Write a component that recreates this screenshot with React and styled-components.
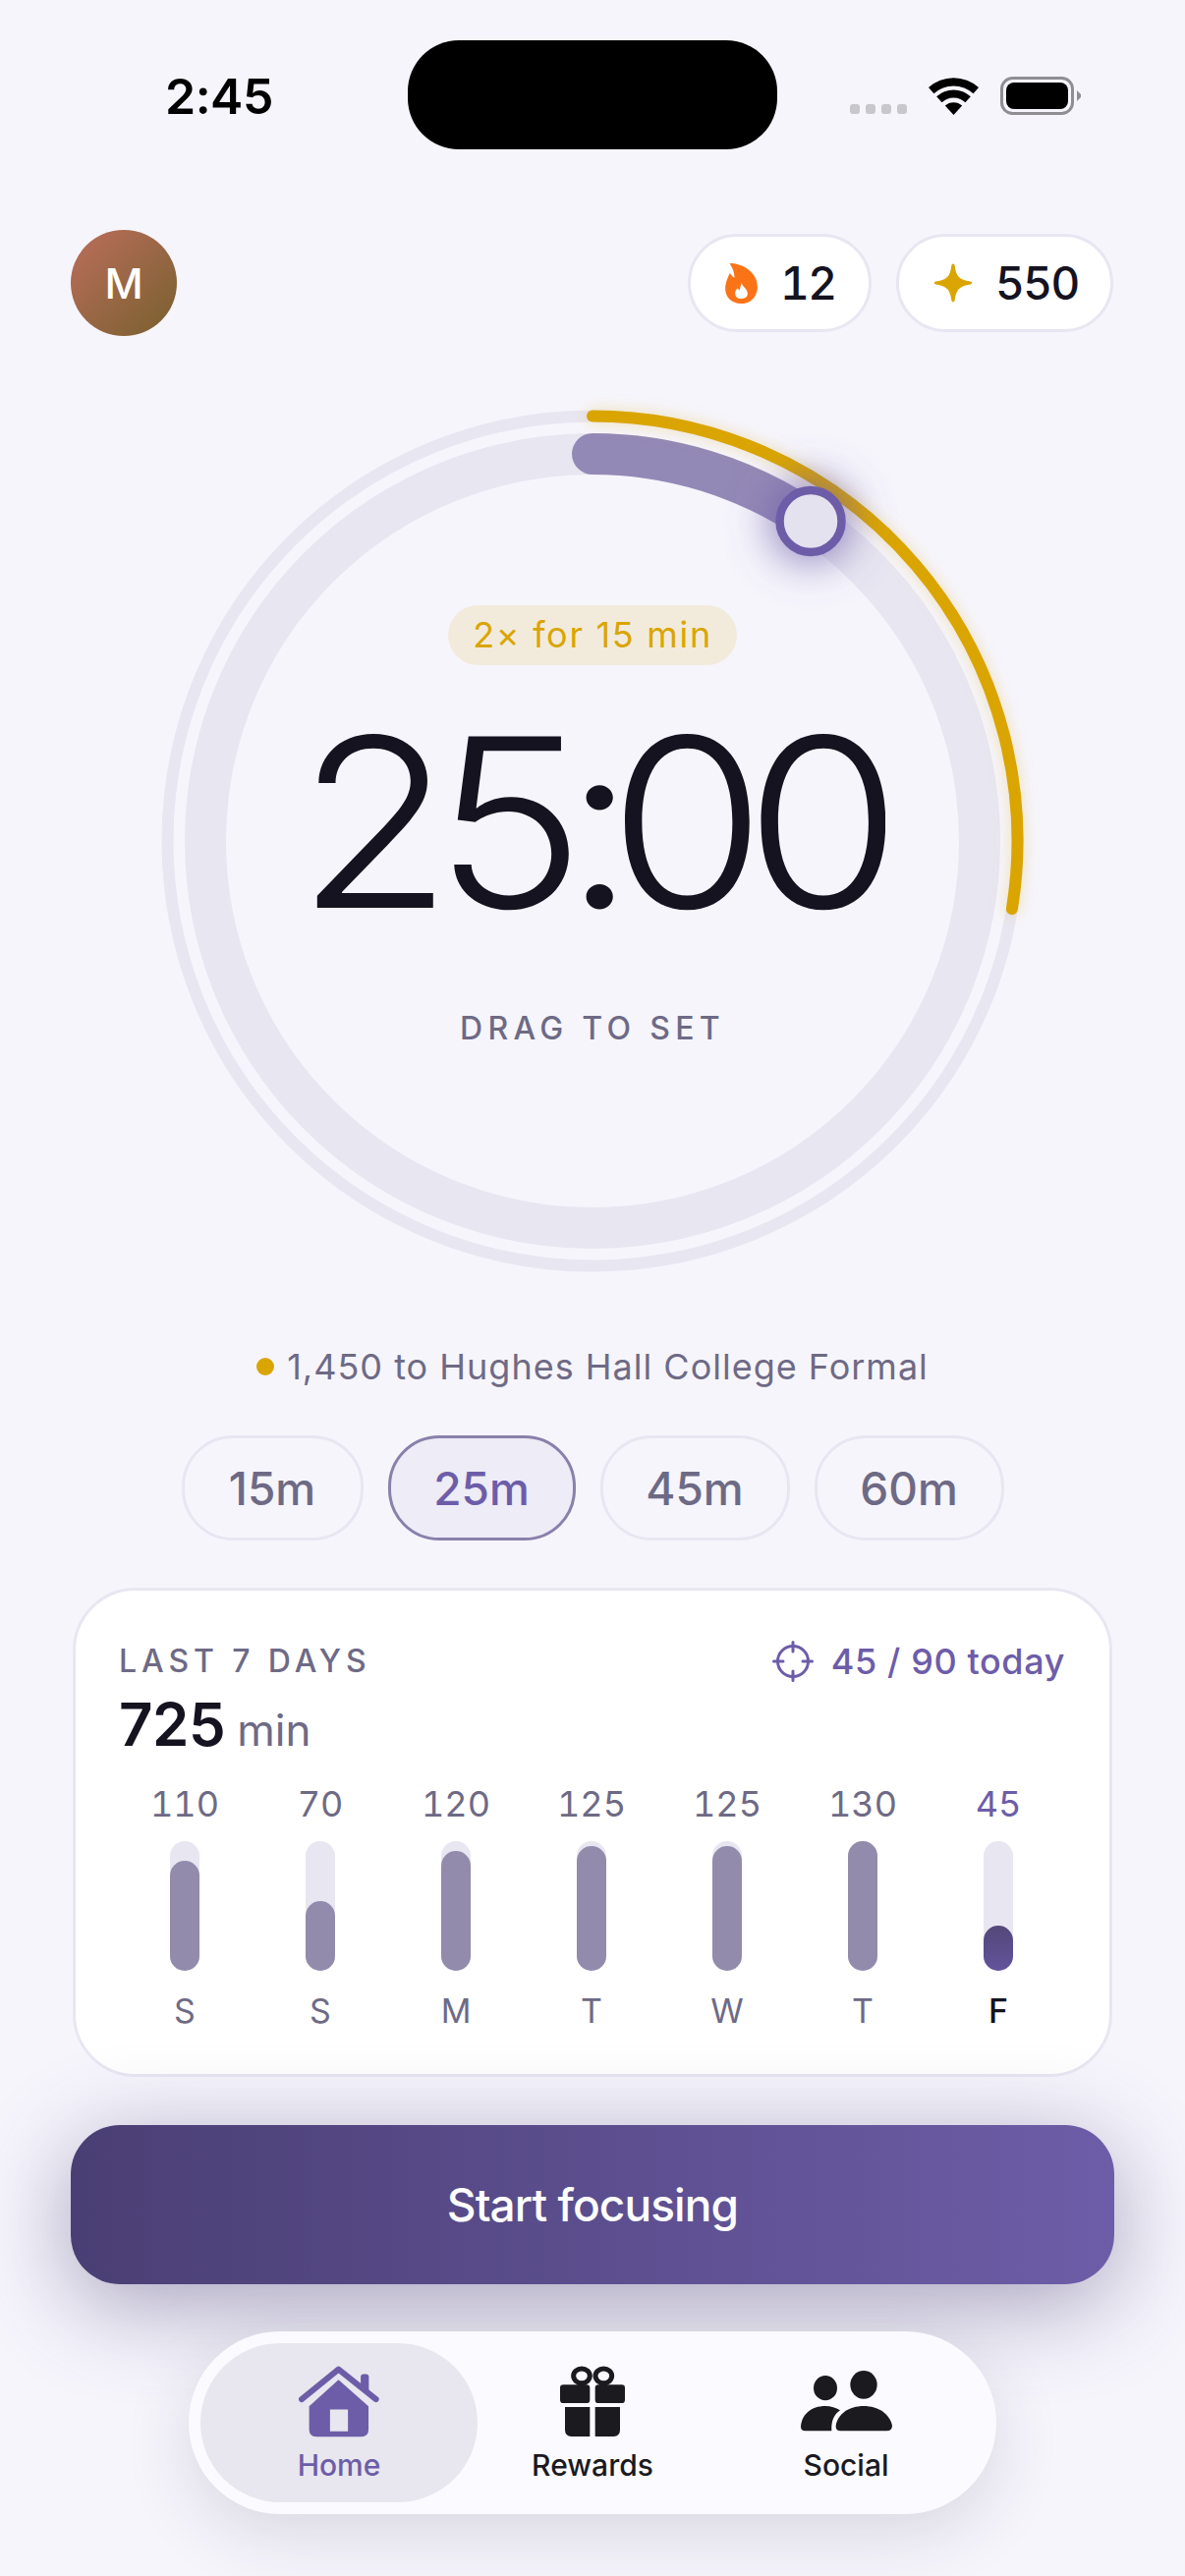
import React from "react";
import styled, { createGlobalStyle } from "styled-components";

const Global = createGlobalStyle`
  html, body {
    margin: 0;
    padding: 0;
    background: #f6f5fc;
  }
  * { box-sizing: border-box; }
`;

const ink = "#14131f";
const muted = "#6e6a85";
const purple = "#6d5da8";
const gold = "#daa500";
const hairline = "#e8e6f1";

const Page = styled.div`
  width: 1206px;
  height: 2622px;
  overflow: hidden;
  background: #f6f5fc;
  font-family: Inter, "Liberation Sans", sans-serif;
  color: ${ink};
`;

/* status bar */
const StatusBar = styled.div`
  display: grid;
  grid-template-columns: 1fr 376px 1fr;
  padding-top: 41px;
  height: 152px;
`;

const Clock = styled.div`
  padding: 2px 0 0 168px;
  font-size: 50px;
  font-weight: 600;
  color: #000;
  line-height: 111px;
  letter-spacing: -0.5px;
`;

const Island = styled.div`
  height: 111px;
  border-radius: 52px;
  background: #000;
`;

const StatusIcons = styled.div`
  display: flex;
  align-items: center;
  height: 111px;
  padding-left: 74px;
`;

const Signal = styled.div`
  display: flex;
  gap: 6px;
  margin-top: 29px;
  margin-right: 22px;
`;

const SignalDot = styled.span`
  width: 10px;
  height: 10px;
  border-radius: 3px;
  background: #c7c7cc;
`;

const WifiIcon = styled.svg`
  width: 51px;
  height: 38px;
  margin: 3px 22px 0 0;
`;

const BatteryIcon = styled.svg`
  width: 82px;
  height: 39px;
  margin-top: 2px;
`;

/* header */
const TopBar = styled.div`
  display: flex;
  align-items: center;
  justify-content: space-between;
  margin: 82px 73px 0 72px;
  height: 108px;
`;

const Avatar = styled.div`
  width: 108px;
  height: 108px;
  border-radius: 50%;
  background: linear-gradient(135deg, #bc6e5c 0%, #77602e 100%);
  color: #fff;
  font-size: 43px;
  font-weight: 500;
  display: flex;
  align-items: center;
  justify-content: center;
`;

const Pills = styled.div`
  display: flex;
  gap: 25px;
`;

const Pill = styled.div`
  width: ${(p) => p.$w}px;
  height: 100px;
  padding-left: 35px;
  display: flex;
  align-items: center;
  gap: 23px;
  background: #fff;
  border: 3px solid ${hairline};
  border-radius: 50px;
  font-size: 46px;
  font-weight: 500;
  font-variant-numeric: tabular-nums;
  letter-spacing: -1.5px;
`;

/* dial */
const Dial = styled.div`
  display: grid;
  width: 878px;
  height: 878px;
  margin: 75px auto 0;
`;

const DialArt = styled.svg`
  grid-area: 1 / 1;
  width: 878px;
  height: 878px;
  overflow: visible;
`;

const DialCenter = styled.div`
  grid-area: 1 / 1;
  display: flex;
  flex-direction: column;
  align-items: center;
  padding-top: 199px;
`;

const Boost = styled.div`
  height: 61px;
  padding: 0 25px;
  border-radius: 31px;
  background: #f2ebdc;
  color: ${gold};
  font-size: 36px;
  line-height: 61px;
  letter-spacing: 1.7px;
`;

const Timer = styled.div`
  width: 596px;
  height: 240px;
  margin-top: 40px;
  overflow: hidden;
  color: ${ink};
`;

const TimerText = styled.div`
  margin-left: -7px;
  font-size: 240px;
  font-weight: 340;
  line-height: 240px;
  letter-spacing: -27px;
  font-variant-numeric: tabular-nums;
  white-space: nowrap;
  transform: scaleX(1.08);
  transform-origin: left center;
`;

const DragHint = styled.div`
  margin-top: 70px;
  font-size: 32px;
  font-weight: 500;
  line-height: 40px;
  letter-spacing: 5.3px;
  color: ${muted};
`;

/* goal + duration chips */
const Goal = styled.div`
  display: flex;
  align-items: center;
  justify-content: center;
  gap: 13px;
  height: 44px;
  margin-top: 74px;
  font-size: 36px;
  letter-spacing: 1px;
  color: ${muted};
`;

const GoalDot = styled.span`
  width: 18px;
  height: 18px;
  border-radius: 50%;
  background: ${gold};
`;

const Chips = styled.div`
  display: flex;
  justify-content: center;
  gap: 25px;
  margin-top: 48px;
`;

const Chip = styled.div`
  width: ${(p) => p.$w}px;
  height: 107px;
  display: flex;
  align-items: center;
  justify-content: center;
  border: 3px solid ${(p) => (p.$active ? "#8a80ab" : hairline)};
  border-radius: 52px;
  background: ${(p) => (p.$active ? "#eeecf6" : "transparent")};
  color: ${(p) => (p.$active ? purple : muted)};
  font-size: 46px;
  font-weight: 500;
`;

/* weekly card */
const Card = styled.div`
  height: 498px;
  margin: 48px 74px 0;
  padding: 50px 45px 0 44px;
  background: #fff;
  border: 3px solid ${hairline};
  border-radius: 64px;
`;

const CardHead = styled.div`
  display: flex;
  justify-content: space-between;
  align-items: flex-start;
`;

const CardLabel = styled.div`
  font-size: 32px;
  font-weight: 500;
  line-height: 44px;
  letter-spacing: 4.9px;
  color: ${muted};
`;

const Today = styled.div`
  display: flex;
  align-items: center;
  gap: 18px;
  font-size: 36px;
  font-weight: 450;
  line-height: 44px;
  letter-spacing: 0.6px;
  color: ${purple};
`;

const TotalRow = styled.div`
  display: flex;
  align-items: baseline;
  gap: 12px;
  margin-top: 6px;
  line-height: 72px;
`;

const Total = styled.span`
  font-size: 60px;
  font-weight: 600;
  letter-spacing: -0.5px;
`;

const TotalUnit = styled.span`
  font-size: 44px;
  color: ${muted};
`;

const Bars = styled.div`
  display: grid;
  grid-template-columns: repeat(7, 1fr);
  margin: 17px -1px 0 -2px;
`;

const BarCol = styled.div`
  display: flex;
  flex-direction: column;
  align-items: center;
`;

const BarValue = styled.div`
  font-size: 36px;
  line-height: 44px;
  font-variant-numeric: tabular-nums;
  color: ${(p) => (p.$today ? purple : muted)};
`;

const BarTrack = styled.div`
  display: flex;
  align-items: flex-end;
  width: 30px;
  height: 132px;
  margin-top: 16px;
  border-radius: 15px;
  background: ${hairline};
`;

const BarFill = styled.div`
  width: 100%;
  border-radius: 15px;
  background: ${(p) => (p.$today ? "linear-gradient(180deg, #544879, #62539c)" : "#928bac")};
`;

const BarDay = styled.div`
  margin-top: 20px;
  font-size: 34px;
  line-height: 42px;
  color: ${(p) => (p.$today ? ink : muted)};
  font-weight: ${(p) => (p.$today ? 450 : 400)};
`;

/* call to action */
const StartButton = styled.div`
  height: 162px;
  margin: 49px 72px 0;
  display: flex;
  align-items: center;
  justify-content: center;
  border-radius: 50px;
  background: linear-gradient(90deg, #4a3f74 0%, #6d5da8 100%);
  box-shadow: 0 20px 95px rgba(74, 63, 116, 0.46);
  color: #fff;
  font-size: 46px;
  font-weight: 500;
  letter-spacing: -0.9px;
`;

/* tab bar */
const TabBar = styled.div`
  display: flex;
  justify-content: center;
  width: 822px;
  height: 186px;
  margin: 48px auto 0;
  padding-top: 12px;
  border-radius: 93px;
  background: #fbfaff;
  box-shadow: 0 20px 70px rgba(40, 36, 60, 0.14);
`;

const Tab = styled.div`
  position: relative;
  width: 258px;
  height: 162px;
  padding-top: 22px;
  display: flex;
  flex-direction: column;
  align-items: center;
  color: ${(p) => (p.$active ? purple : "#1a1a1f")};

  ${(p) =>
    p.$active &&
    `
    &::before {
      content: "";
      position: absolute;
      inset: 0 -12px 0 -12px;
      border-radius: 81px;
      background: #e8e7ef;
    }
  `}
`;

const TabIcon = styled.div`
  position: relative;
  display: flex;
  align-items: center;
  justify-content: center;
  height: 74px;
`;

const TabLabel = styled.div`
  position: relative;
  margin-top: 10px;
  font-size: 30px;
  font-weight: 500;
  line-height: 36px;
`;

const polar = (r, deg) => {
  const a = (deg * Math.PI) / 180;
  return [439 + r * Math.sin(a), 439 - r * Math.cos(a)];
};

const arc = (r, from, to) => {
  const [x1, y1] = polar(r, from);
  const [x2, y2] = polar(r, to);
  return `M${x1} ${y1} A${r} ${r} 0 ${to - from > 180 ? 1 : 0} 1 ${x2} ${y2}`;
};

const KNOB_ANGLE = 34.3;
const GOLD_ANGLE = 99.2;

const RingArt = () => {
  const [kx, ky] = polar(394, KNOB_ANGLE);
  return (
    <DialArt viewBox="0 0 878 878" fill="none">
      <defs>
        <filter id="knobGlow" x="-150%" y="-150%" width="400%" height="400%">
          <feGaussianBlur stdDeviation="22" />
        </filter>
        <filter id="goldGlow" x="-20%" y="-20%" width="140%" height="140%">
          <feGaussianBlur stdDeviation="8" />
        </filter>
      </defs>
      <circle cx="439" cy="439" r="432.5" stroke={hairline} strokeWidth="12" />
      <circle cx="439" cy="439" r="394" stroke={hairline} strokeWidth="42" />
      <path d={arc(394, 0, KNOB_ANGLE)} stroke="#9389b6" strokeWidth="42" strokeLinecap="round" />
      <path
        d={arc(432.5, 0, GOLD_ANGLE)}
        stroke={gold}
        strokeOpacity="0.3"
        strokeWidth="12"
        strokeLinecap="round"
        filter="url(#goldGlow)"
      />
      <path d={arc(432.5, 0, GOLD_ANGLE)} stroke={gold} strokeWidth="12" strokeLinecap="round" />
      <circle cx={kx} cy={ky} r="42" fill={purple} fillOpacity="0.75" filter="url(#knobGlow)" />
      <circle cx={kx} cy={ky} r="31.5" fill="#e4e2ee" stroke={purple} strokeWidth="8.5" />
    </DialArt>
  );
};

const Flame = () => (
  <svg width="33" height="41" viewBox="0 0 98 123">
    <path
      fill="#fb7317"
      d="M13 0C40 -2 98 20 98 72C98 102 78 123 48 123C20 123 0 104 0 78C0 60 8 42 14 30C18 36 22 42 28 44C28 28 22 14 13 0Z"
    />
    <path
      fill="#fff"
      d="M50 60C52 72 68 78 68 92C68 103 59 108 48 108C37 108 30 101 30 92C30 84 34 80 38 76C40 80 42 82 44 82C46 74 46 68 50 60Z"
    />
  </svg>
);

const Sparkle = () => (
  <svg width="40" height="40" viewBox="0 0 40 40">
    <path
      fill={gold}
      d="M20 0.5C21 0.5 21.6 1.5 21.8 3C22.8 12.5 26 17 37.6 18.6C39.8 19 39.8 21 37.6 21.4C26 23 22.8 27.5 21.8 37C21.6 38.5 21 39.5 20 39.5C19 39.5 18.4 38.5 18.2 37C17.2 27.5 14 23 2.4 21.4C0.2 21 0.2 19 2.4 18.6C14 17 17.2 12.5 18.2 3C18.4 1.5 19 0.5 20 0.5Z"
    />
  </svg>
);

const Target = () => (
  <svg width="42" height="42" viewBox="0 0 42 42" fill="none" stroke={purple} strokeWidth="3" strokeLinecap="round">
    <circle cx="21" cy="21" r="15.5" />
    <path d="M21 1.5V11M21 31V40.5M1.5 21H11M31 21H40.5" />
  </svg>
);

const HomeIcon = () => (
  <svg width="82" height="73" viewBox="38 40 247 218" fill={purple}>
    <path fillRule="evenodd" d="M160 82L252 163V235Q252 257 230 257H92Q70 257 70 235V163ZM134 173V240H189V173Z" />
    <path d="M228 74Q228 65 237 65H244Q253 65 253 74V120L228 100Z" />
    <path d="M47 142L160 50L275 142" fill="none" stroke={purple} strokeWidth="18" strokeLinecap="round" strokeLinejoin="round" />
  </svg>
);

const GiftIcon = () => (
  <svg width="66" height="72" viewBox="45 36 198 216" fill="#1a1a1f">
    <ellipse cx="111" cy="67" rx="25" ry="22" fill="none" stroke="#1a1a1f" strokeWidth="15" />
    <ellipse cx="178" cy="67" rx="25" ry="22" fill="none" stroke="#1a1a1f" strokeWidth="15" />
    <rect x="45" y="94" width="91" height="56" rx="10" />
    <rect x="152" y="94" width="91" height="56" rx="10" />
    <path d="M60 162H136V252H80Q60 252 60 232Z" />
    <path d="M152 162H228V232Q228 252 208 252H152Z" />
  </svg>
);

const SocialIcon = () => (
  <svg width="93" height="62" viewBox="783 57 279 186" fill="#1a1a1f">
    <ellipse cx="975" cy="100" rx="41" ry="43" />
    <ellipse cx="858" cy="110" rx="36" ry="38" />
    <path d="M890 225C895 190 930 165 975 165C1020 165 1055 190 1062 225Q1062 241 1045 241H905Q888 241 890 225Z" />
    <path d="M783 228C786 190 815 165 858 165C875 165 890 170 903 178C885 190 875 210 877 241H797Q783 241 783 228Z" />
  </svg>
);

const chips = [
  { label: "15m", w: 185 },
  { label: "25m", w: 191, active: true },
  { label: "45m", w: 193 },
  { label: "60m", w: 193 },
];

const week = [
  { day: "S", min: 110 },
  { day: "S", min: 70 },
  { day: "M", min: 120 },
  { day: "T", min: 125 },
  { day: "W", min: 125 },
  { day: "T", min: 130 },
  { day: "F", min: 45, today: true },
];

export default function App() {
  return (
    <Page>
      <Global />
      <StatusBar>
        <Clock>2:45</Clock>
        <Island />
        <StatusIcons>
          <Signal>
            <SignalDot />
            <SignalDot />
            <SignalDot />
            <SignalDot />
          </Signal>
          <WifiIcon viewBox="0 0 152 113" fill="#000">
            <path d="M0 30A113 113 0 0 1 152 30L135.8 48.5A88 88 0 0 0 16.2 48.5Z" />
            <path d="M24.3 57.3A76 76 0 0 1 127.7 57.3L111.4 74.9A52 52 0 0 0 40.6 74.9Z" />
            <path d="M50.2 85.1A38 38 0 0 1 101.8 85.1L76 113Z" />
          </WifiIcon>
          <BatteryIcon viewBox="0 0 82 39">
            <rect x="1.5" y="1.5" width="72" height="36" rx="11" fill="none" stroke="#8e8e93" strokeWidth="3" />
            <rect x="6" y="6" width="63" height="27" rx="8" fill="#000" />
            <path d="M78 14L82 18V21L78 25Z" fill="#8e8e93" />
          </BatteryIcon>
        </StatusIcons>
      </StatusBar>

      <TopBar>
        <Avatar>M</Avatar>
        <Pills>
          <Pill $w={187}>
            <Flame />
            12
          </Pill>
          <Pill $w={221}>
            <Sparkle />
            550
          </Pill>
        </Pills>
      </TopBar>

      <Dial>
        <RingArt />
        <DialCenter>
          <Boost>2× for 15 min</Boost>
          <Timer>
            <TimerText>25:00</TimerText>
          </Timer>
          <DragHint>DRAG TO SET</DragHint>
        </DialCenter>
      </Dial>

      <Goal>
        <GoalDot />
        1,450 to Hughes Hall College Formal
      </Goal>

      <Chips>
        {chips.map((c) => (
          <Chip key={c.label} $w={c.w} $active={c.active}>
            {c.label}
          </Chip>
        ))}
      </Chips>

      <Card>
        <CardHead>
          <CardLabel>LAST 7 DAYS</CardLabel>
          <Today>
            <Target />
            45 / 90 today
          </Today>
        </CardHead>
        <TotalRow>
          <Total>725</Total>
          <TotalUnit>min</TotalUnit>
        </TotalRow>
        <Bars>
          {week.map((d, i) => (
            <BarCol key={i}>
              <BarValue $today={d.today}>{d.min}</BarValue>
              <BarTrack>
                <BarFill $today={d.today} style={{ height: `${(d.min / 130) * 100}%` }} />
              </BarTrack>
              <BarDay $today={d.today}>{d.day}</BarDay>
            </BarCol>
          ))}
        </Bars>
      </Card>

      <StartButton>Start focusing</StartButton>

      <TabBar>
        <Tab $active>
          <TabIcon>
            <HomeIcon />
          </TabIcon>
          <TabLabel>Home</TabLabel>
        </Tab>
        <Tab>
          <TabIcon>
            <GiftIcon />
          </TabIcon>
          <TabLabel>Rewards</TabLabel>
        </Tab>
        <Tab>
          <TabIcon>
            <SocialIcon />
          </TabIcon>
          <TabLabel>Social</TabLabel>
        </Tab>
      </TabBar>
    </Page>
  );
}
